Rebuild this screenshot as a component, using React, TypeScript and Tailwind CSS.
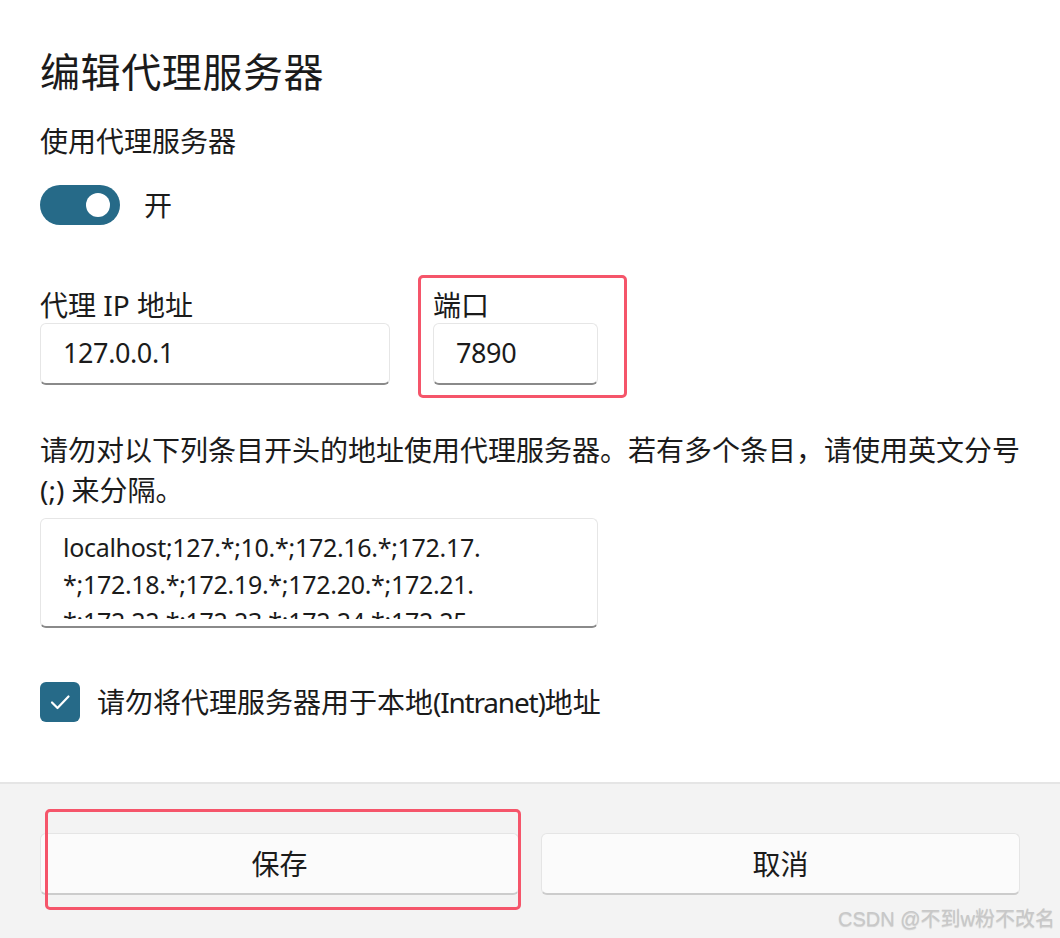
import React from 'react';

const FONT = "font-['Noto_Sans','Noto_Sans_CJK_SC',sans-serif]";

function TextBox({ value, className = '' }: { value: string; className?: string }) {
  return (
    <div
      className={`h-[62px] rounded-[6px] border border-[#e6e6e6] border-b-2 border-b-[#8a8a8a] bg-white px-[22px] flex items-center text-[27px] tracking-[-0.4px] text-[#1b1b1b] ${className}`}
    >
      {value}
    </div>
  );
}

export default function App() {
  const bypass = [
    'localhost;127.*;10.*;172.16.*;172.17.',
    '*;172.18.*;172.19.*;172.20.*;172.21.',
    '*;172.22.*;172.23.*;172.24.*;172.25.',
  ];

  return (
    <div className={`w-[1060px] h-[938px] bg-white flex flex-col text-[#1b1b1b] ${FONT}`}>
      {/* Body */}
      <div className="flex-1 px-10 pt-[44px]">
        <h1 className="text-[40px] leading-[56px] font-normal tracking-[0.6px]">编辑代理服务器</h1>
        <p className="mt-[21px] text-[28px] leading-[40px]">使用代理服务器</p>

        <div className="mt-[24px] flex items-center gap-[24px]">
          <div className="w-[80px] h-[40px] rounded-full bg-[#266a88] flex items-center justify-end pr-[10px]">
            <div className="w-[24px] h-[24px] rounded-full bg-white" />
          </div>
          <span className="text-[28px] leading-[40px]">开</span>
        </div>

        {/* IP + port */}
        <div className="mt-[62px] flex gap-[43px]">
          <div className="w-[350px] flex flex-col">
            <label className="text-[28px] leading-[36px]">代理 IP 地址</label>
            <TextBox value="127.0.0.1" />
          </div>
          <div className="relative w-[165px] flex flex-col">
            <label className="text-[28px] leading-[36px]">端口</label>
            <TextBox value="7890" />
            <div className="absolute left-[-15px] top-[-12px] right-[-29px] bottom-[-13px] border-[3px] border-[#f5556a] rounded-[5px] pointer-events-none" />
          </div>
        </div>

        <p className="mt-[45px] text-[28px] leading-[40px]">
          请勿对以下列条目开头的地址使用代理服务器。若有多个条目，请使用英文分号
          <br />
          (;) 来分隔。
        </p>

        <div className="mt-[8px] w-[558px] h-[110px] rounded-[6px] border border-[#e6e6e6] border-b-2 border-b-[#8a8a8a] bg-white pl-[22px] pt-[10px]">
          <div className="h-[90px] overflow-hidden text-[25px] leading-[37px] tracking-[-0.3px]">
            {bypass.map((line) => (
              <div key={line}>{line}</div>
            ))}
          </div>
        </div>

        <div className="mt-[54px] flex items-center gap-[17px]">
          <div className="w-[40px] h-[40px] shrink-0 rounded-[6px] bg-[#266a88] flex items-center justify-center">
            <svg className="w-[26px] h-[26px]" viewBox="0 0 26 26" fill="none">
              <path d="M5 13.5 L10.5 19 L21.5 7.5" stroke="white" strokeWidth="2.2" strokeLinecap="round" strokeLinejoin="round" />
            </svg>
          </div>
          <span className="text-[28px] leading-[40px]">
            请勿将代理服务器用于本地<span className="tracking-[-1.2px]">(Intranet)</span>地址
          </span>
        </div>
      </div>

      {/* Footer */}
      <div className="relative h-[156px] shrink-0 bg-[#f3f3f3] border-t-2 border-[#e5e5e5] px-10 pt-[49px]">
        <div className="grid grid-cols-2 gap-[22px]">
          <div className="relative">
            <button className="w-full h-[62px] rounded-[6px] bg-[#fbfbfb] border border-[#e5e5e5] border-b-2 border-b-[#cccccc] text-[28px]">
              保存
            </button>
            <div className="absolute left-[5px] top-[-24px] right-[-2px] bottom-[-15px] border-[3px] border-[#f5556a] rounded-[5px] pointer-events-none" />
          </div>
          <button className="w-full h-[62px] rounded-[6px] bg-[#fbfbfb] border border-[#e5e5e5] border-b-2 border-b-[#cccccc] text-[28px]">
            取消
          </button>
        </div>
        <span className="absolute right-[5px] bottom-[7px] text-[20px] leading-[24px] text-[#c8c8c8] [text-shadow:0_1px_1px_rgba(0,0,0,0.15)] font-['Liberation_Sans','Noto_Sans_CJK_SC',sans-serif]">
          CSDN @不到w粉不改名
        </span>
      </div>
    </div>
  );
}
